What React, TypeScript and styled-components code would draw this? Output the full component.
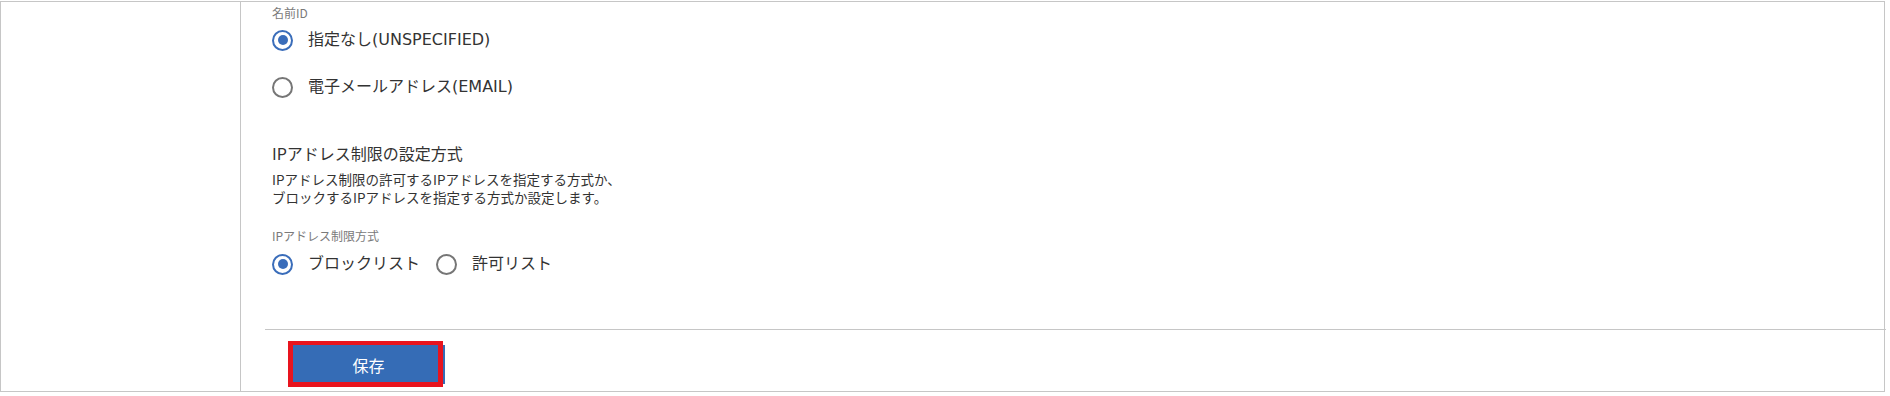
import React, { useState } from "react";
import styled, { createGlobalStyle } from "styled-components";

const GlobalStyle = createGlobalStyle`
  html, body {
    margin: 0;
    padding: 0;
    background: #fff;
  }
  body {
    font-family: "Noto Sans CJK JP", "Noto Sans", sans-serif;
    color: #333;
  }
`;

type Option = { value: string; label: string };

const nameIdOptions: Option[] = [
  { value: "UNSPECIFIED", label: "指定なし(UNSPECIFIED)" },
  { value: "EMAIL", label: "電子メールアドレス(EMAIL)" },
];

const ipModeOptions: Option[] = [
  { value: "BLOCK", label: "ブロックリスト" },
  { value: "ALLOW", label: "許可リスト" },
];

const App = () => {
  const [nameId, setNameId] = useState("UNSPECIFIED");
  const [ipMode, setIpMode] = useState("BLOCK");

  return (
    <Page>
      <GlobalStyle />
      <Sheet>
        <SideCell />
        <MainCell>
          <Body>
            <FieldLabel>名前ID</FieldLabel>
            <RadioColumn>
              {nameIdOptions.map((o) => (
                <RadioItem key={o.value} onClick={() => setNameId(o.value)}>
                  <RadioMark $checked={nameId === o.value} />
                  <RadioText>{o.label}</RadioText>
                </RadioItem>
              ))}
            </RadioColumn>

            <SectionTitle>IPアドレス制限の設定方式</SectionTitle>
            <Description>
              IPアドレス制限の許可するIPアドレスを指定する方式か、
              <br />
              ブロックするIPアドレスを指定する方式か設定します。
            </Description>

            <FieldLabel $top={21}>IPアドレス制限方式</FieldLabel>
            <RadioRow>
              {ipModeOptions.map((o) => (
                <RadioItem key={o.value} onClick={() => setIpMode(o.value)}>
                  <RadioMark $checked={ipMode === o.value} />
                  <RadioText>{o.label}</RadioText>
                </RadioItem>
              ))}
            </RadioRow>
          </Body>
          <Footer>
            <SaveButton>保存</SaveButton>
          </Footer>
        </MainCell>
      </Sheet>
    </Page>
  );
};

const Page = styled.div`
  width: 1890px;
  height: 396px;
  padding-top: 1px;
  box-sizing: border-box;
`;

const Sheet = styled.div`
  width: 1885px;
  height: 391px;
  box-sizing: border-box;
  border: 1px solid #c6c6c6;
  display: grid;
  grid-template-columns: 240px 1fr;
`;

const SideCell = styled.div`
  border-right: 1px solid #c6c6c6;
`;

const MainCell = styled.div`
  display: flex;
  flex-direction: column;
  min-width: 0;
`;

const Body = styled.div`
  flex: 1;
  padding: 2px 0 0 31px;
`;

const FieldLabel = styled.div<{ $top?: number }>`
  font-size: 12px;
  line-height: 18px;
  color: #7a7a7a;
  margin-top: ${(p) => p.$top ?? 0}px;
`;

const RadioColumn = styled.div`
  display: flex;
  flex-direction: column;
  gap: 25px;
  margin-top: 7px;
`;

const RadioRow = styled.div`
  display: flex;
  align-items: center;
  gap: 16px;
  margin-top: 8px;
`;

const RadioItem = styled.label`
  display: flex;
  align-items: center;
  gap: 15px;
  height: 22px;
  cursor: pointer;
`;

const RadioMark = styled.span<{ $checked: boolean }>`
  width: 21px;
  height: 21px;
  box-sizing: border-box;
  border-radius: 50%;
  border: 2.5px solid ${(p) => (p.$checked ? "#3a6dba" : "#767676")};
  display: flex;
  align-items: center;
  justify-content: center;
  &::after {
    content: "";
    width: 10px;
    height: 10px;
    border-radius: 50%;
    background: #3a6dba;
    display: ${(p) => (p.$checked ? "block" : "none")};
  }
`;

const RadioText = styled.span`
  font-family: "DejaVu Sans", "Noto Sans CJK JP", sans-serif;
  font-size: 16px;
  line-height: 22px;
  color: #333;
`;

const SectionTitle = styled.div`
  font-size: 16px;
  line-height: 22px;
  color: #333;
  margin-top: 44px;
`;

const Description = styled.div`
  font-size: 13.5px;
  line-height: 18px;
  color: #333;
  margin-top: 6px;
`;

const Footer = styled.div`
  margin-left: 24px;
  margin-right: -2px;
  border-top: 1px solid #c6c6c6;
  padding: 15px 0 7px 27px;
`;

const SaveButton = styled.button`
  position: relative;
  width: 153px;
  height: 39px;
  border: none;
  background: #356cb6;
  color: #fff;
  font-family: "Noto Sans CJK JP", sans-serif;
  font-size: 16px;
  padding: 0;
  cursor: pointer;
  &::before {
    content: "";
    position: absolute;
    left: -4px;
    top: -4px;
    width: 155px;
    height: 46px;
    box-sizing: border-box;
    border: 5px solid #e8141e;
    border-top-width: 4px;
    pointer-events: none;
  }
`;

export default App;
